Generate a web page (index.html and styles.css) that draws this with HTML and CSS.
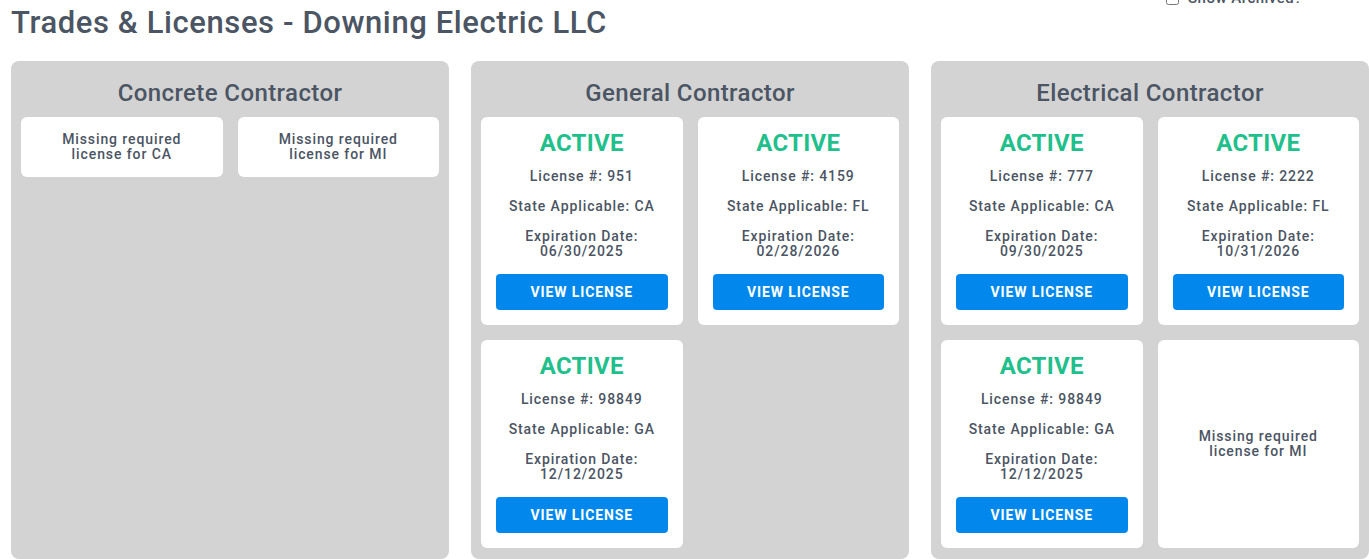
FILE: index.html
```html
<!DOCTYPE html>
<html lang="en">
<head>
<meta charset="utf-8">
<title>Trades &amp; Licenses</title>
<link rel="stylesheet" href="styles.css">
</head>
<body>
<header class="page-header">
  <h1 class="page-title">Trades &amp; Licenses - Downing Electric LLC</h1>
  <label class="archived"><input type="checkbox" class="archived-box"><span>Show Archived?</span></label>
</header>
<main class="trades">
  <section class="trade">
    <h2 class="trade-title">Concrete Contractor</h2>
    <div class="cards">
      <div class="card missing">Missing required license for CA</div>
      <div class="card missing">Missing required license for MI</div>
    </div>
  </section>
  <section class="trade">
    <h2 class="trade-title">General Contractor</h2>
    <div class="cards">
      <div class="card license">
        <div class="status">ACTIVE</div>
        <p class="line">License #: 951</p>
        <p class="line">State Applicable: CA</p>
        <p class="line">Expiration Date:<br>06/30/2025</p>
        <button class="view-btn">VIEW LICENSE</button>
      </div>
      <div class="card license">
        <div class="status">ACTIVE</div>
        <p class="line">License #: 4159</p>
        <p class="line">State Applicable: FL</p>
        <p class="line">Expiration Date:<br>02/28/2026</p>
        <button class="view-btn">VIEW LICENSE</button>
      </div>
      <div class="card license">
        <div class="status">ACTIVE</div>
        <p class="line">License #: 98849</p>
        <p class="line">State Applicable: GA</p>
        <p class="line">Expiration Date:<br>12/12/2025</p>
        <button class="view-btn">VIEW LICENSE</button>
      </div>
    </div>
  </section>
  <section class="trade">
    <h2 class="trade-title">Electrical Contractor</h2>
    <div class="cards">
      <div class="card license">
        <div class="status">ACTIVE</div>
        <p class="line">License #: 777</p>
        <p class="line">State Applicable: CA</p>
        <p class="line">Expiration Date:<br>09/30/2025</p>
        <button class="view-btn">VIEW LICENSE</button>
      </div>
      <div class="card license">
        <div class="status">ACTIVE</div>
        <p class="line">License #: 2222</p>
        <p class="line">State Applicable: FL</p>
        <p class="line">Expiration Date:<br>10/31/2026</p>
        <button class="view-btn">VIEW LICENSE</button>
      </div>
      <div class="card license">
        <div class="status">ACTIVE</div>
        <p class="line">License #: 98849</p>
        <p class="line">State Applicable: GA</p>
        <p class="line">Expiration Date:<br>12/12/2025</p>
        <button class="view-btn">VIEW LICENSE</button>
      </div>
      <div class="card missing">Missing required license for MI</div>
    </div>
  </section>
</main>
</body>
</html>
```
FILE: styles.css
```css
* { box-sizing: border-box; }
html, body { margin: 0; padding: 0; }
body {
  font-family: Roboto, "Liberation Sans", sans-serif;
  color: #4b5563;
  background: #ffffff;
  padding-left: 11px;
  width: 1369px;
  height: 559px;
  overflow: hidden;
}
.page-header {
  display: flex;
  justify-content: space-between;
  align-items: flex-start;
}
.page-title {
  margin: 0;
  padding-top: 5px;
  font-size: 31px;
  line-height: 36px;
  font-weight: 500;
  letter-spacing: 0.6px;
}
.archived {
  display: flex;
  align-items: center;
  gap: 9px;
  margin-top: -11px;
  margin-right: 67px;
  font-size: 15px;
  font-weight: 500;
  line-height: 18px;
  letter-spacing: 0.5px;
}
.archived-box {
  margin: 0;
  width: 13px;
  height: 13px;
}
.trades {
  display: grid;
  grid-template-columns: repeat(3, 438px);
  column-gap: 22px;
  margin-top: 20px;
  height: 498px;
}
.trade {
  background: #d3d3d3;
  border-radius: 8px;
  padding: 10px;
  display: flex;
  flex-direction: column;
}
.trade-title {
  margin: 6px 0 8px;
  text-align: center;
  font-size: 24px;
  line-height: 32px;
  font-weight: 500;
  letter-spacing: 0.4px;
}
.cards {
  display: grid;
  grid-template-columns: 1fr 1fr;
  gap: 15px;
  align-content: start;
}
.card {
  background: #ffffff;
  border-radius: 6px;
  text-align: center;
  font-size: 14px;
  font-weight: 500;
  line-height: 15px;
  letter-spacing: 0.9px;
}
.missing {
  padding: 15px 26px;
  display: flex;
  align-items: center;
  justify-content: center;
}
.license {
  padding: 13px 15px 15px;
  display: flex;
  flex-direction: column;
}
.status {
  color: #1fc08c;
  font-size: 24px;
  line-height: 26px;
  font-weight: 700;
  letter-spacing: 0.3px;
  margin-bottom: 13px;
}
.line {
  margin: 0 0 15px;
}
.view-btn {
  height: 36px;
  border: 0;
  border-radius: 4px;
  background: #0288ec;
  color: #ffffff;
  font-family: inherit;
  font-size: 14px;
  font-weight: 700;
  letter-spacing: 0.9px;
}
```
